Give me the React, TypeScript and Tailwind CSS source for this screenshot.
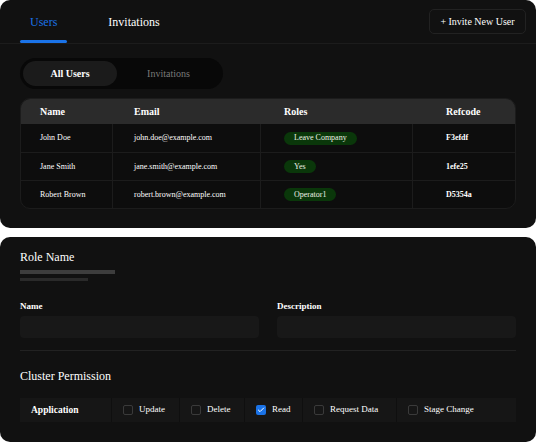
import { Check } from 'lucide-react';

const users = [
  { name: 'John Doe', email: 'john.doe@example.com', role: 'Leave Company', ref: 'F3efdf' },
  { name: 'Jane Smith', email: 'jane.smith@example.com', role: 'Yes', ref: '1efe25' },
  { name: 'Robert Brown', email: 'robert.brown@example.com', role: 'Operator1', ref: 'D5354a' },
];

const perms = [
  { label: 'Update', checked: false, w: 'w-[68px]' },
  { label: 'Delete', checked: false, w: 'w-[65px]' },
  { label: 'Read', checked: true, w: 'w-[58px]' },
  { label: 'Request Data', checked: false, w: 'w-[94px]' },
  { label: 'Stage Change', checked: false, w: 'flex-1' },
];

function Box({ checked }: { checked: boolean }) {
  if (checked) {
    return (
      <span className="w-[10px] h-[10px] rounded-[2px] bg-[#1a73e8] flex items-center justify-center shrink-0">
        <Check size={8} strokeWidth={3} className="text-white" />
      </span>
    );
  }
  return <span className="w-[10px] h-[10px] rounded-[2px] border border-[#3a3a3a] shrink-0" />;
}

export default function App() {
  return (
    <div className="w-[536px] h-[442px] bg-white flex flex-col gap-[9px] font-[Liberation_Serif,Times_New_Roman,serif] overflow-hidden">
      {/* Users card */}
      <div className="h-[228px] shrink-0 bg-[#111111] rounded-[10px] flex flex-col">
        <div className="flex items-center justify-between pl-5 pr-[10px] border-b border-[#1c1c1c]">
          <div className="flex items-end gap-[31px]">
            <div className="relative h-[43px] px-[10px] flex items-center text-[12px] text-[#1a73e8]">
              Users
              <span className="absolute left-0 right-0 bottom-0 h-[3px] rounded-full bg-[#1a73e8]" />
            </div>
            <div className="h-[43px] px-[10px] flex items-center text-[12px] text-white">Invitations</div>
          </div>
          <button className="h-[25px] w-[97px] rounded-[5px] border border-[#222222] text-[10px] text-white">
            + Invite New User
          </button>
        </div>

        <div className="mt-[14px] ml-5 w-[203px] h-[31px] rounded-full bg-[#080808] p-[3px] flex">
          <div className="w-[94px] rounded-full bg-[#1b1b1b] flex items-center justify-center text-[10px] font-bold text-white">
            All Users
          </div>
          <div className="flex-1 flex items-center justify-center text-[10px] text-[#7a7a7a]">Invitations</div>
        </div>

        <div className="mt-[9px] mx-5 rounded-[10px] border border-[#1c1c1c] bg-[#0d0d0d] overflow-hidden">
          <div className="flex h-[25px] items-center bg-[#2b2b2b] text-[10px] font-bold text-white">
            <div className="w-[92px] pl-[19px]">Name</div>
            <div className="w-[148px] pl-[21px]">Email</div>
            <div className="w-[152px] pl-[23px]">Roles</div>
            <div className="flex-1 pl-[33px]">Refcode</div>
          </div>
          {users.map((u, i) => (
            <div
              key={u.name}
              className={`flex h-[28px] text-[8px] text-white ${i > 0 ? 'border-t border-[#1c1c1c]' : ''}`}
            >
              <div className="w-[92px] pl-[19px] flex items-center border-r border-[#1c1c1c]">{u.name}</div>
              <div className="w-[148px] pl-[21px] flex items-center border-r border-[#1c1c1c]">{u.email}</div>
              <div className="w-[152px] pl-[23px] flex items-center border-r border-[#1c1c1c]">
                <span className="h-[13px] px-[10px] rounded-full bg-[#0a370a] flex items-center text-[8px] text-[#eef2e6]">
                  {u.role}
                </span>
              </div>
              <div className="flex-1 pl-[33px] flex items-center font-bold">{u.ref}</div>
            </div>
          ))}
        </div>
      </div>

      {/* Role card */}
      <div className="h-[205px] shrink-0 bg-[#111111] rounded-[10px] px-5 pt-[12px] flex flex-col">
        <div className="text-[12px] leading-[16px] text-white">Role Name</div>
        <div className="mt-[5px] w-[95px] h-[4px] bg-[#3d3d3d]" />
        <div className="mt-[4px] w-[68px] h-[3px] bg-[#2a2a2a]" />

        <div className="mt-[19px] flex gap-[18px]">
          <div className="flex-1 flex flex-col">
            <div className="text-[9px] font-bold text-white leading-[12px]">Name</div>
            <div className="mt-[4px] h-[22px] rounded-[4px] bg-[#181818]" />
          </div>
          <div className="flex-1 flex flex-col">
            <div className="text-[9px] font-bold text-white leading-[12px]">Description</div>
            <div className="mt-[4px] h-[22px] rounded-[4px] bg-[#181818]" />
          </div>
        </div>

        <div className="mt-[12px] h-px bg-[#222222]" />

        <div className="mt-[17px] text-[12px] leading-[16px] text-white">Cluster Permission</div>

        <div className="mt-[14px] h-[24px] bg-[#161616] flex text-[9px] text-white">
          <div className="w-[92px] pl-[11px] flex items-center font-bold text-[9.5px] border-r border-[#0f0f0f]">
            Application
          </div>
          {perms.map((p, i) => (
            <div
              key={p.label}
              className={`${p.w} pl-[11px] flex items-center gap-[6px] ${i < perms.length - 1 ? 'border-r border-[#0f0f0f]' : ''}`}
            >
              <Box checked={p.checked} />
              <span>{p.label}</span>
            </div>
          ))}
        </div>
      </div>
    </div>
  );
}
